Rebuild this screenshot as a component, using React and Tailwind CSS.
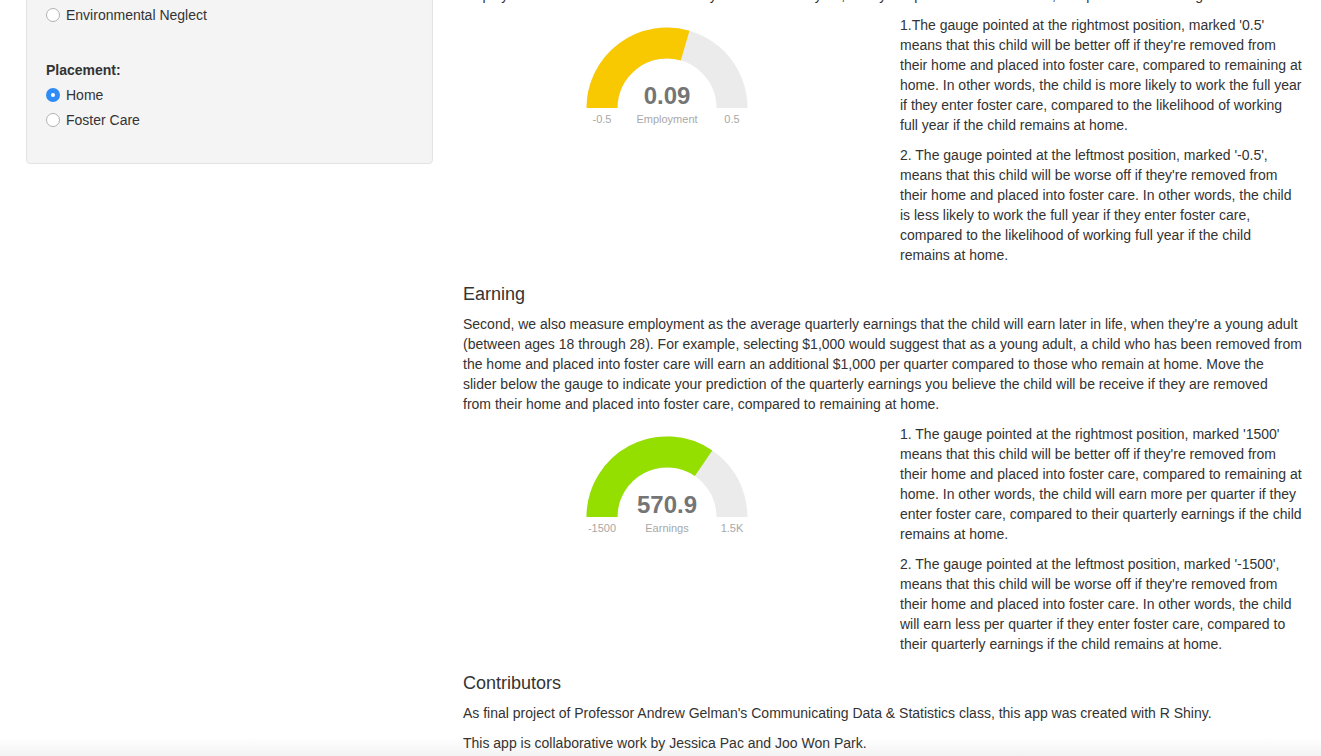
import React from "react";

const FONT = { fontFamily: '"Liberation Sans", Arial, Helvetica, sans-serif' };

function Lines({ lines, className = "" }) {
  return (
    <p className={"mb-[10px] leading-[20px] " + className}>
      {lines.map((l, i) => (
        <span key={i} className="block whitespace-nowrap">
          {l}
        </span>
      ))}
    </p>
  );
}

function Radio({ checked, label }) {
  return (
    <div className="flex h-[20px] items-center">
      {checked ? (
        <span className="flex h-[14px] w-[14px] items-center justify-center rounded-full bg-[#2f8bf5]">
          <span className="h-[4px] w-[4px] rounded-full bg-white" />
        </span>
      ) : (
        <span className="h-[14px] w-[14px] rounded-full border border-[#b2b2b2] bg-white" />
      )}
      <span className="ml-[6px]">{label}</span>
    </div>
  );
}

function Gauge({ value, min, max, color, label, minLabel, maxLabel }) {
  const cx = 100;
  const cy = 93;
  const r = 65;
  const frac = (value - min) / (max - min);
  const theta = Math.PI - frac * Math.PI;
  const ex = cx + r * Math.cos(theta);
  const ey = cy - r * Math.sin(theta);
  const bg = `M ${cx - r} ${cy} A ${r} ${r} 0 0 1 ${cx + r} ${cy}`;
  const fg = `M ${cx - r} ${cy} A ${r} ${r} 0 0 1 ${ex} ${ey}`;
  return (
    <svg width="200" height="115" viewBox="0 0 200 115" className="block">
      <path d={bg} fill="none" stroke="#ebebeb" strokeWidth="31" />
      <path d={fg} fill="none" stroke={color} strokeWidth="31" />
      <text
        x="100"
        y="88.5"
        textAnchor="middle"
        fontFamily='"Liberation Sans", Arial, sans-serif'
        fontWeight="700"
        fontSize="24"
        fill="#757575"
      >
        {String(value)}
      </text>
      <text x="35" y="107.6" textAnchor="middle" fontFamily='"Liberation Sans", Arial, sans-serif' fontSize="11" fill="#a8a8a8">
        {minLabel}
      </text>
      <text x="100" y="107.6" textAnchor="middle" fontFamily='"Liberation Sans", Arial, sans-serif' fontSize="11" fill="#a8a8a8">
        {label}
      </text>
      <text x="165" y="107.6" textAnchor="middle" fontFamily='"Liberation Sans", Arial, sans-serif' fontSize="11" fill="#a8a8a8">
        {maxLabel}
      </text>
    </svg>
  );
}

export default function App() {
  return (
    <div className="relative h-[756px] w-[1321px] overflow-hidden bg-white text-[14px] leading-[20px] text-[#333333]" style={FONT}>
      <div className="pointer-events-none absolute inset-x-0 bottom-0 h-[18px] bg-gradient-to-b from-transparent to-[#f2f2f2]" />

      <div className="relative z-10 flex pl-[26px]">
        {/* Sidebar */}
        <div className="w-[407px] shrink-0">
          <div className="-mt-[20px] rounded-[4px] border border-[#e3e3e3] bg-[#f4f4f4] pb-[33px] pl-[19px] pt-[24px] shadow-[inset_0_1px_1px_rgba(0,0,0,0.05)]">
            <Radio label="Environmental Neglect" />
            <div className="mt-[35px] font-bold">Placement:</div>
            <div className="mt-[5px]">
              <Radio checked label="Home" />
            </div>
            <div className="mt-[5px]">
              <Radio label="Foster Care" />
            </div>
          </div>
        </div>

        {/* Main */}
        <div className="ml-[30px] w-[845px] shrink-0 -mt-[15px]">
          <Lines
            lines={[
              "employment as whether the child is likely to work the full year, if they are placed into foster care, compared to remaining at home.",
            ]}
          />

          <div className="flex">
            <div className="flex w-[407px] shrink-0 justify-center">
              <Gauge value={0.09} min={-0.5} max={0.5} color="#f8c900" label="Employment" minLabel="-0.5" maxLabel="0.5" />
            </div>
            <div className="ml-[30px] w-[408px] shrink-0">
              <Lines
                lines={[
                  "1.The gauge pointed at the rightmost position, marked '0.5'",
                  "means that this child will be better off if they're removed from",
                  "their home and placed into foster care, compared to remaining at",
                  "home. In other words, the child is more likely to work the full year",
                  "if they enter foster care, compared to the likelihood of working",
                  "full year if the child remains at home.",
                ]}
              />
              <Lines
                lines={[
                  "2. The gauge pointed at the leftmost position, marked '-0.5',",
                  "means that this child will be worse off if they're removed from",
                  "their home and placed into foster care. In other words, the child",
                  "is less likely to work the full year if they enter foster care,",
                  "compared to the likelihood of working full year if the child",
                  "remains at home.",
                ]}
              />
            </div>
          </div>

          <h4 className="mb-[9px] mt-[10px] text-[18px] font-medium leading-[19.8px]">Earning</h4>
          <Lines
            lines={[
              "Second, we also measure employment as the average quarterly earnings that the child will earn later in life, when they're a young adult",
              "(between ages 18 through 28). For example, selecting $1,000 would suggest that as a young adult, a child who has been removed from",
              "the home and placed into foster care will earn an additional $1,000 per quarter compared to those who remain at home. Move the",
              "slider below the gauge to indicate your prediction of the quarterly earnings you believe the child will be receive if they are removed",
              "from their home and placed into foster care, compared to remaining at home.",
            ]}
          />

          <div className="flex">
            <div className="flex w-[407px] shrink-0 justify-center">
              <Gauge value={570.9} min={-1500} max={1500} color="#95df00" label="Earnings" minLabel="-1500" maxLabel="1.5K" />
            </div>
            <div className="ml-[30px] w-[408px] shrink-0">
              <Lines
                lines={[
                  "1. The gauge pointed at the rightmost position, marked '1500'",
                  "means that this child will be better off if they're removed from",
                  "their home and placed into foster care, compared to remaining at",
                  "home. In other words, the child will earn more per quarter if they",
                  "enter foster care, compared to their quarterly earnings if the child",
                  "remains at home.",
                ]}
              />
              <Lines
                lines={[
                  "2. The gauge pointed at the leftmost position, marked '-1500',",
                  "means that this child will be worse off if they're removed from",
                  "their home and placed into foster care. In other words, the child",
                  "will earn less per quarter if they enter foster care, compared to",
                  "their quarterly earnings if the child remains at home.",
                ]}
              />
            </div>
          </div>

          <h4 className="mb-[9px] mt-[10px] text-[18px] font-medium leading-[19.8px]">Contributors</h4>
          <Lines lines={["As final project of Professor Andrew Gelman's Communicating Data & Statistics class, this app was created with R Shiny."]} />
          <Lines lines={["This app is collaborative work by Jessica Pac and Joo Won Park."]} />
        </div>
      </div>
    </div>
  );
}
